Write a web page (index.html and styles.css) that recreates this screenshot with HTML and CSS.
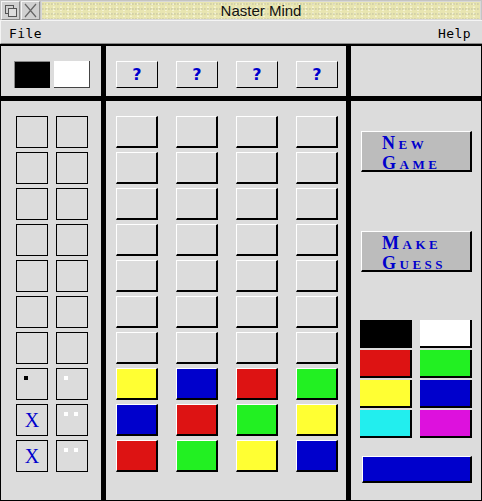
FILE: index.html
```html
<!DOCTYPE html>
<html lang="en">
<head>
    <meta charset="UTF-8">
    <title>Naster Mind</title>
    <link rel="stylesheet" href="styles.css">
</head>
<body>
    <div class="titlebar">
        <div class="tbtn">
            <svg width="17" height="17" viewBox="0 0 17 17">
                <rect x="3.5" y="3.5" width="8" height="8" fill="none" stroke="#555"/>
                <rect x="6.5" y="6.5" width="8" height="8" fill="#ddd" stroke="#555"/>
            </svg>
        </div>
        <div class="tbtn">
            <svg width="17" height="17" viewBox="0 0 17 17">
                <path d="M3 2 L14 15 M14 2 L3 15" stroke="#666" stroke-width="1.2"/>
            </svg>
        </div>
        <div class="title">Naster Mind</div>
    </div>
    <div class="menubar">
        <span>File</span>
        <span>Help</span>
    </div>

    <div class="frame">
        <div class="panel topleft">
            <div class="sw sw-black"></div>
            <div class="sw sw-white"></div>
        </div>
        <div class="panel topmid">
            <div class="q">?</div>
            <div class="q">?</div>
            <div class="q">?</div>
            <div class="q">?</div>
        </div>
        <div class="panel"></div>

        <div class="panel pegs" id="pegs"></div>
        <div class="panel board" id="board"></div>

        <div class="panel side">
            <div class="bigbtn"><span>New</span><span>Game</span></div>
            <div class="bigbtn guess"><span>Make</span><span>Guess</span></div>
            <div class="palette">
                <div class="pc black"></div>
                <div class="pc white"></div>
                <div class="pc red"></div>
                <div class="pc green"></div>
                <div class="pc yellow"></div>
                <div class="pc blue"></div>
                <div class="pc cyan"></div>
                <div class="pc magenta"></div>
            </div>
            <div class="current"></div>
        </div>
    </div>

    <script>
        // guesses made so far, from the bottom row up
        const guesses=[
            ["yellow","blue","red","green"],
            ["blue","red","green","yellow"],
            ["red","green","yellow","blue"]
        ];
        // left box: black pegs / "X", right box: white pegs
        const scores=[
            {left:"b",white:1},
            {left:"x",white:2},
            {left:"x",white:2}
        ];
        const rows=10;
        const board=document.getElementById('board');
        const pegs=document.getElementById('pegs');

        for(let r=0;r<rows;r++){
            let g=r-(rows-guesses.length);
            for(let c=0;c<4;c++){
                let cell=document.createElement("div");
                cell.className="cell";
                if(g>=0){
                    cell.classList.add(guesses[g][c]);
                }
                board.appendChild(cell);
            }

            let a=document.createElement("div");
            a.className="pbox";
            let b=document.createElement("div");
            b.className="pbox";
            if(g>=0){
                if(scores[g].left==="x"){
                    a.classList.add("miss");
                    a.innerHTML="X";
                }
                else{
                    a.innerHTML='<i class="dot dark"></i>';
                }
                for(let i=0;i<scores[g].white;i++){
                    b.innerHTML+='<i class="dot"></i>';
                }
            }
            pegs.appendChild(a);
            pegs.appendChild(b);
        }
    </script>
</body>
</html>
```

FILE: styles.css
```css
body{
    margin:0;
    padding:0;
    background:#dcdcdc;
    width:482px;
    height:501px;
    overflow:hidden;
}
.titlebar{
    display:flex;
    gap:1px;
    height:20px;
    padding:1px 1px 0 1px;
    box-sizing:border-box;
    background:#c4c4c4;
}
.tbtn{
    width:19px;
    height:19px;
    box-sizing:border-box;
    border-top:1px solid #f4f4f4;
    border-left:1px solid #f4f4f4;
    border-right:1px solid #8a8a8a;
    border-bottom:1px solid #8a8a8a;
    background:#d0d0d0;
    display:flex;
    align-items:center;
    justify-content:center;
}
.title{
    flex:1;
    height:19px;
    box-sizing:border-box;
    border:1px solid #d8d8d8;
    background-color:#e8e5b0;
    background-image:
        radial-gradient(circle at 30% 40%, rgba(160,160,150,0.3) 0.6px, transparent 1.2px),
        radial-gradient(circle at 70% 75%, rgba(255,255,235,0.6) 0.6px, transparent 1.2px);
    background-size:3px 5px, 7px 3px;
    font-family:"Liberation Sans", Arial, sans-serif;
    font-size:15px;
    line-height:17px;
    color:#111;
    text-align:center;
}
.menubar{
    display:flex;
    justify-content:space-between;
    height:24px;
    box-sizing:border-box;
    padding:5px 11px 0 8px;
    border-top:1px solid #f4f4f4;
    border-left:1px solid #f4f4f4;
    border-bottom:1px solid #8a8a8a;
    font-family:"DejaVu Sans Mono", monospace;
    font-size:13px;
    letter-spacing:0.4px;
    color:#000;
}
.frame{
    display:grid;
    grid-template-columns:100px 240px 130px;
    grid-template-rows:50px 399px;
    gap:5px;
    padding:2px 1px 1px 1px;
    background:#000;
}
.panel{
    background:#dcdcdc;
}
.topleft{
    display:flex;
    gap:4px;
    padding:15px 0 0 13px;
}
.sw{
    width:36px;
    height:27px;
    box-sizing:border-box;
}
.sw-black{
    background:#000;
    border-top:1px solid #888;
    border-left:1px solid #888;
}
.sw-white{
    background:#fff;
    border-right:1px solid #444;
    border-bottom:1px solid #444;
}
.topmid{
    display:flex;
    gap:18px;
    padding:15px 0 0 10px;
}
.q{
    width:42px;
    height:27px;
    box-sizing:border-box;
    border-top:1px solid #fff;
    border-left:1px solid #fff;
    border-right:1px solid #000;
    border-bottom:1px solid #000;
    font-family:"DejaVu Sans", sans-serif;
    font-weight:bold;
    font-size:16px;
    line-height:25px;
    text-align:center;
    color:#0000cc;
}
.pegs{
    display:grid;
    grid-template-columns:32px 32px;
    grid-auto-rows:32px;
    column-gap:8px;
    row-gap:4px;
    padding:15px 0 0 15px;
    align-content:start;
}
.pbox{
    box-sizing:border-box;
    border:1px solid #000;
    display:flex;
    gap:6px;
    padding:7px;
}
.pbox.miss{
    padding:0 0 1px 0;
    justify-content:center;
    align-items:center;
    font-family:"Liberation Serif", "Times New Roman", serif;
    font-size:20px;
    color:#0000cc;
    line-height:1;
}
.dot{
    display:block;
    width:4px;
    height:4px;
    background:#fff;
}
.dot.dark{
    background:#000;
}
.board{
    display:grid;
    grid-template-columns:repeat(4,42px);
    grid-auto-rows:32px;
    column-gap:18px;
    row-gap:4px;
    padding:15px 0 0 10px;
    align-content:start;
}
.cell{
    box-sizing:border-box;
    border-top:1px solid #fff;
    border-left:1px solid #fff;
    border-right:2px solid #000;
    border-bottom:2px solid #000;
}
.side{
    display:flex;
    flex-direction:column;
    padding:30px 0 0 10px;
}
.bigbtn{
    width:111px;
    height:41px;
    box-sizing:border-box;
    background:#bcbcbc;
    border-top:1px solid #fff;
    border-left:1px solid #fff;
    border-right:2px solid #000;
    border-bottom:2px solid #000;
    display:flex;
    flex-direction:column;
    padding:1px 0 0 20px;
    font-family:"Liberation Serif", "Times New Roman", serif;
    font-weight:bold;
    font-variant:small-caps;
    font-size:18px;
    letter-spacing:3.5px;
    line-height:20px;
    color:#0000cc;
}
.guess{
    margin-top:59px;
}
.palette{
    display:grid;
    grid-template-columns:52px 52px;
    grid-auto-rows:28px;
    column-gap:8px;
    row-gap:2px;
    margin:48px 0 0 -1px;
}
.pc{
    box-sizing:border-box;
    border-right:2px solid #000;
    border-bottom:2px solid #000;
}
.current{
    width:110px;
    height:27px;
    box-sizing:border-box;
    margin:18px 0 0 1px;
    background:#0000cc;
    border-top:1px solid #fff;
    border-left:1px solid #fff;
    border-right:2px solid #000;
    border-bottom:2px solid #000;
}
.black{ background:#000; }
.white{ background:#fff; }
.red{ background:#dd1313; }
.green{ background:#22f022; }
.yellow{ background:#ffff33; }
.blue{ background:#0000cc; }
.cyan{ background:#22eeee; }
.magenta{ background:#dd11dd; }
```
